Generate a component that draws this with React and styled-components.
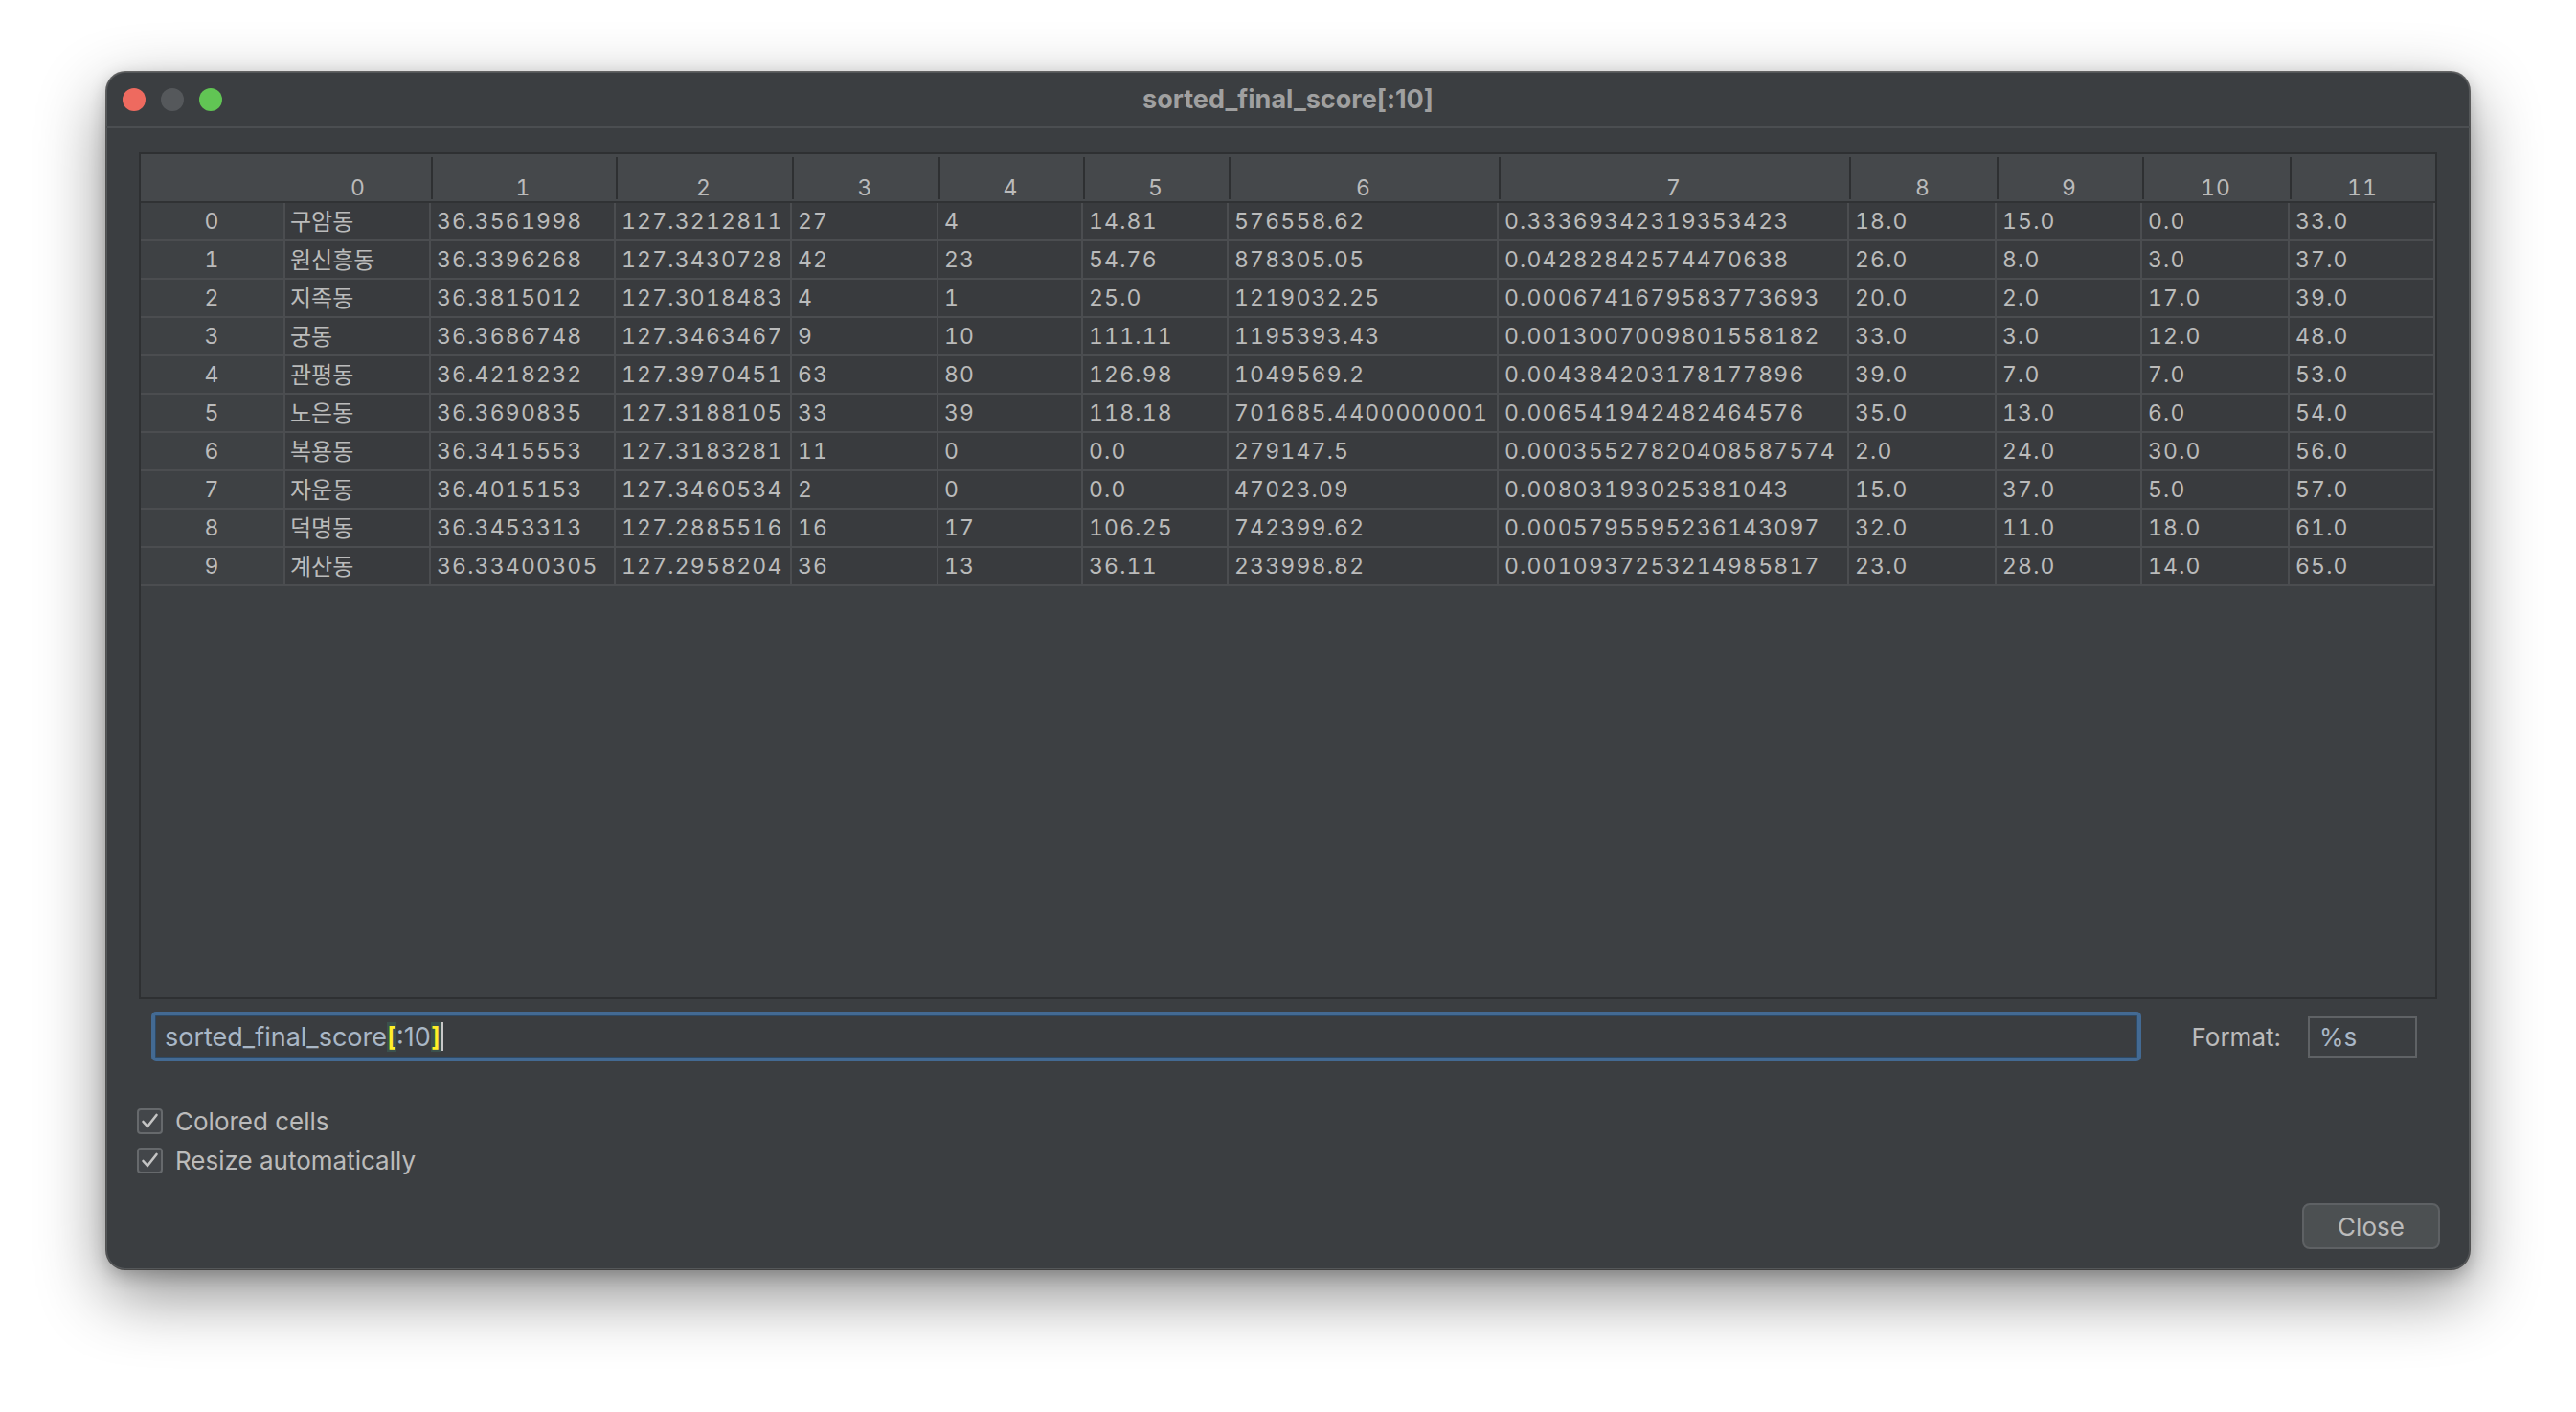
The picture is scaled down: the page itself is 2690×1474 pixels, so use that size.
import React from 'react';
import styled, { createGlobalStyle, css } from 'styled-components';

const COLS = [151, 152, 193, 184, 153, 151, 152, 282, 366, 154, 152, 154, 152];
const TEMPLATE = COLS.map((c) => `${c}px`).join(' ');

const ROWS = [
  ['구암동', '36.3561998', '127.3212811', '27', '4', '14.81', '576558.62', '0.33369342319353423', '18.0', '15.0', '0.0', '33.0'],
  ['원신흥동', '36.3396268', '127.3430728', '42', '23', '54.76', '878305.05', '0.04282842574470638', '26.0', '8.0', '3.0', '37.0'],
  ['지족동', '36.3815012', '127.3018483', '4', '1', '25.0', '1219032.25', '0.0006741679583773693', '20.0', '2.0', '17.0', '39.0'],
  ['궁동', '36.3686748', '127.3463467', '9', '10', '111.11', '1195393.43', '0.0013007009801558182', '33.0', '3.0', '12.0', '48.0'],
  ['관평동', '36.4218232', '127.3970451', '63', '80', '126.98', '1049569.2', '0.004384203178177896', '39.0', '7.0', '7.0', '53.0'],
  ['노은동', '36.3690835', '127.3188105', '33', '39', '118.18', '701685.4400000001', '0.006541942482464576', '35.0', '13.0', '6.0', '54.0'],
  ['복용동', '36.3415553', '127.3183281', '11', '0', '0.0', '279147.5', '0.00035527820408587574', '2.0', '24.0', '30.0', '56.0'],
  ['자운동', '36.4015153', '127.3460534', '2', '0', '0.0', '47023.09', '0.00803193025381043', '15.0', '37.0', '5.0', '57.0'],
  ['덕명동', '36.3453313', '127.2885516', '16', '17', '106.25', '742399.62', '0.0005795595236143097', '32.0', '11.0', '18.0', '61.0'],
  ['계산동', '36.33400305', '127.2958204', '36', '13', '36.11', '233998.82', '0.0010937253214985817', '23.0', '28.0', '14.0', '65.0'],
];

const GlobalStyle = createGlobalStyle`
  html, body { margin: 0; padding: 0; background: #ffffff; }
  body { font-family: Inter, "Noto Sans CJK KR", sans-serif; }
  * { box-sizing: border-box; }
`;

const Stage = styled.div`
  width: 2690px;
  height: 1474px;
  padding: 75px 111px 0 111px;
  background: #ffffff;
  overflow: hidden;
`;

const Window = styled.div`
  width: 2468px;
  height: 1250px;
  display: flex;
  flex-direction: column;
  background: #3b3e41;
  border-radius: 20px;
  overflow: hidden;
  box-shadow: 0 0 0 1px rgba(0, 0, 0, 0.55), inset 0 0 0 1px rgba(255, 255, 255, 0.13),
    0 26px 70px rgba(0, 0, 0, 0.45), 0 6px 18px rgba(0, 0, 0, 0.22);
`;

const TitleBar = styled.div`
  flex: none;
  height: 59px;
  display: grid;
  grid-template-columns: 1fr auto 1fr;
  align-items: center;
  padding: 0 17px;
  border-bottom: 2px solid #4b4e51;
`;

const Lights = styled.div`
  display: flex;
  gap: 16px;
  align-items: center;
`;

const Light = styled.span`
  width: 24px;
  height: 24px;
  border-radius: 50%;
  background: ${(p) => p.$color};
`;

const Title = styled.div`
  font-family: Inter, sans-serif;
  font-weight: 700;
  font-size: 27px;
  color: #a0a0a0;
`;

const Content = styled.div`
  flex: 1;
  min-height: 0;
  display: flex;
  flex-direction: column;
  padding: 25px 34px 21px;
`;

const TableFrame = styled.div`
  flex: 1;
  min-height: 0;
  border: 2px solid #2e3032;
  background: #3d4043;
  overflow: hidden;
`;

const cellFont = css`
  font-family: Inter, "Noto Sans CJK KR", sans-serif;
  font-size: 23px;
  font-variant-numeric: tabular-nums;
  letter-spacing: 1.2px;
  color: #bbbbbb;
  white-space: nowrap;
`;

const HeaderRow = styled.div`
  display: grid;
  grid-template-columns: ${TEMPLATE};
  height: 51px;
  background: #45484b;
  border-bottom: 2px solid #303234;
`;

const HeaderCell = styled.div`
  ${cellFont}
  position: relative;
  display: flex;
  align-items: flex-end;
  justify-content: center;
  line-height: 23px;
  padding-bottom: 2px;
  ${(p) =>
    p.$sep &&
    css`
      &::before {
        content: '';
        position: absolute;
        left: 0;
        top: 3px;
        bottom: 2px;
        width: 2px;
        background: #2e3032;
      }
    `}
`;

const DataRow = styled.div`
  display: grid;
  grid-template-columns: ${TEMPLATE};
  height: 40px;
  border-bottom: 2px solid #4b4d50;
`;

const Cell = styled.div`
  ${cellFont}
  display: flex;
  align-items: center;
  overflow: hidden;
  border-right: 2px solid #4b4d50;
  background: #393b3e;
  padding-left: 6px;
  ${(p) =>
    p.$index &&
    css`
      justify-content: center;
      padding-left: 0;
      background: #3e4144;
    `}
  ${(p) =>
    p.$ko &&
    css`
      font-size: 24px;
      letter-spacing: 0;
      padding-left: 5px;
      padding-bottom: 3px;
    `}
`;

const FieldRow = styled.div`
  flex: none;
  display: flex;
  align-items: center;
  height: 52px;
  margin-top: 13px;
  padding: 0 21px 0 13px;
`;

const ExprField = styled.div`
  flex: 1;
  height: 52px;
  display: flex;
  align-items: center;
  padding-left: 10px;
  border: 4px solid #436a93;
  border-radius: 5px;
  box-shadow: inset 0 0 0 1px #2d4a67;
  background: #3a3d40;
  font-family: Inter, sans-serif;
  font-size: 27px;
  color: #a9b7c6;
  white-space: pre;
`;

const Brace = styled.span`
  display: inline-block;
  height: 31px;
  line-height: 31px;
  background: #3b514d;
  color: #ffef28;
  font-weight: 600;
`;

const Caret = styled.span`
  display: inline-block;
  width: 2px;
  height: 30px;
  margin-left: 1px;
  background: #c8c8c8;
`;

const FormatLabel = styled.span`
  margin: 0 28px 0 53px;
  font-family: Inter, sans-serif;
  font-size: 26px;
  color: #bbbbbb;
`;

const FormatInput = styled.div`
  width: 114px;
  height: 43px;
  display: flex;
  align-items: center;
  padding-left: 10px;
  border: 2px solid #5f6265;
  background: #3b3e41;
  font-family: Inter, sans-serif;
  font-size: 26px;
  color: #a9b7c6;
`;

const CheckList = styled.div`
  flex: none;
  display: flex;
  flex-direction: column;
  margin-top: 42px;
  margin-left: -2px;
`;

const CheckRow = styled.label`
  height: 41px;
  display: flex;
  align-items: center;
  gap: 13px;
  font-family: Inter, sans-serif;
  font-size: 26px;
  color: #bbbbbb;
`;

const Box = styled.span`
  width: 27px;
  height: 27px;
  display: flex;
  align-items: center;
  justify-content: center;
  border: 2px solid #66696c;
  border-radius: 4px;
  background: #43464a;
`;

const Footer = styled.div`
  flex: none;
  display: flex;
  justify-content: flex-end;
  margin-top: 24px;
  margin-right: -3px;
`;

const CloseButton = styled.button`
  width: 144px;
  height: 48px;
  border: 2px solid #5e6164;
  border-radius: 8px;
  background: #4c5052;
  color: #bbbbbb;
  font-family: Inter, sans-serif;
  font-size: 26px;
  padding: 0;
`;

function Check() {
  return (
    <svg width="19" height="19" viewBox="0 0 19 19" fill="none">
      <path d="M2.5 10 L7 15 L16.5 3" stroke="#c4c4c4" strokeWidth="2.6" strokeLinecap="round" strokeLinejoin="round" />
    </svg>
  );
}

export default function App() {
  return (
    <Stage>
      <GlobalStyle />
      <Window>
        <TitleBar>
          <Lights>
            <Light $color="#ee6a5f" />
            <Light $color="#55585b" />
            <Light $color="#61c554" />
          </Lights>
          <Title>sorted_final_score[:10]</Title>
          <span />
        </TitleBar>
        <Content>
          <TableFrame>
            <HeaderRow>
              <HeaderCell />
              {Array.from({ length: 12 }, (_, i) => (
                <HeaderCell key={i} $sep={i > 0}>
                  {i}
                </HeaderCell>
              ))}
            </HeaderRow>
            {ROWS.map((row, r) => (
              <DataRow key={r}>
                <Cell $index>{r}</Cell>
                {row.map((v, c) => (
                  <Cell key={c} $ko={c === 0}>
                    {v}
                  </Cell>
                ))}
              </DataRow>
            ))}
          </TableFrame>
          <FieldRow>
            <ExprField>
              sorted_final_score<Brace>[</Brace>:10<Brace>]</Brace>
              <Caret />
            </ExprField>
            <FormatLabel>Format:</FormatLabel>
            <FormatInput>%s</FormatInput>
          </FieldRow>
          <CheckList>
            <CheckRow>
              <Box>
                <Check />
              </Box>
              Colored cells
            </CheckRow>
            <CheckRow>
              <Box>
                <Check />
              </Box>
              Resize automatically
            </CheckRow>
          </CheckList>
          <Footer>
            <CloseButton>Close</CloseButton>
          </Footer>
        </Content>
      </Window>
    </Stage>
  );
}
